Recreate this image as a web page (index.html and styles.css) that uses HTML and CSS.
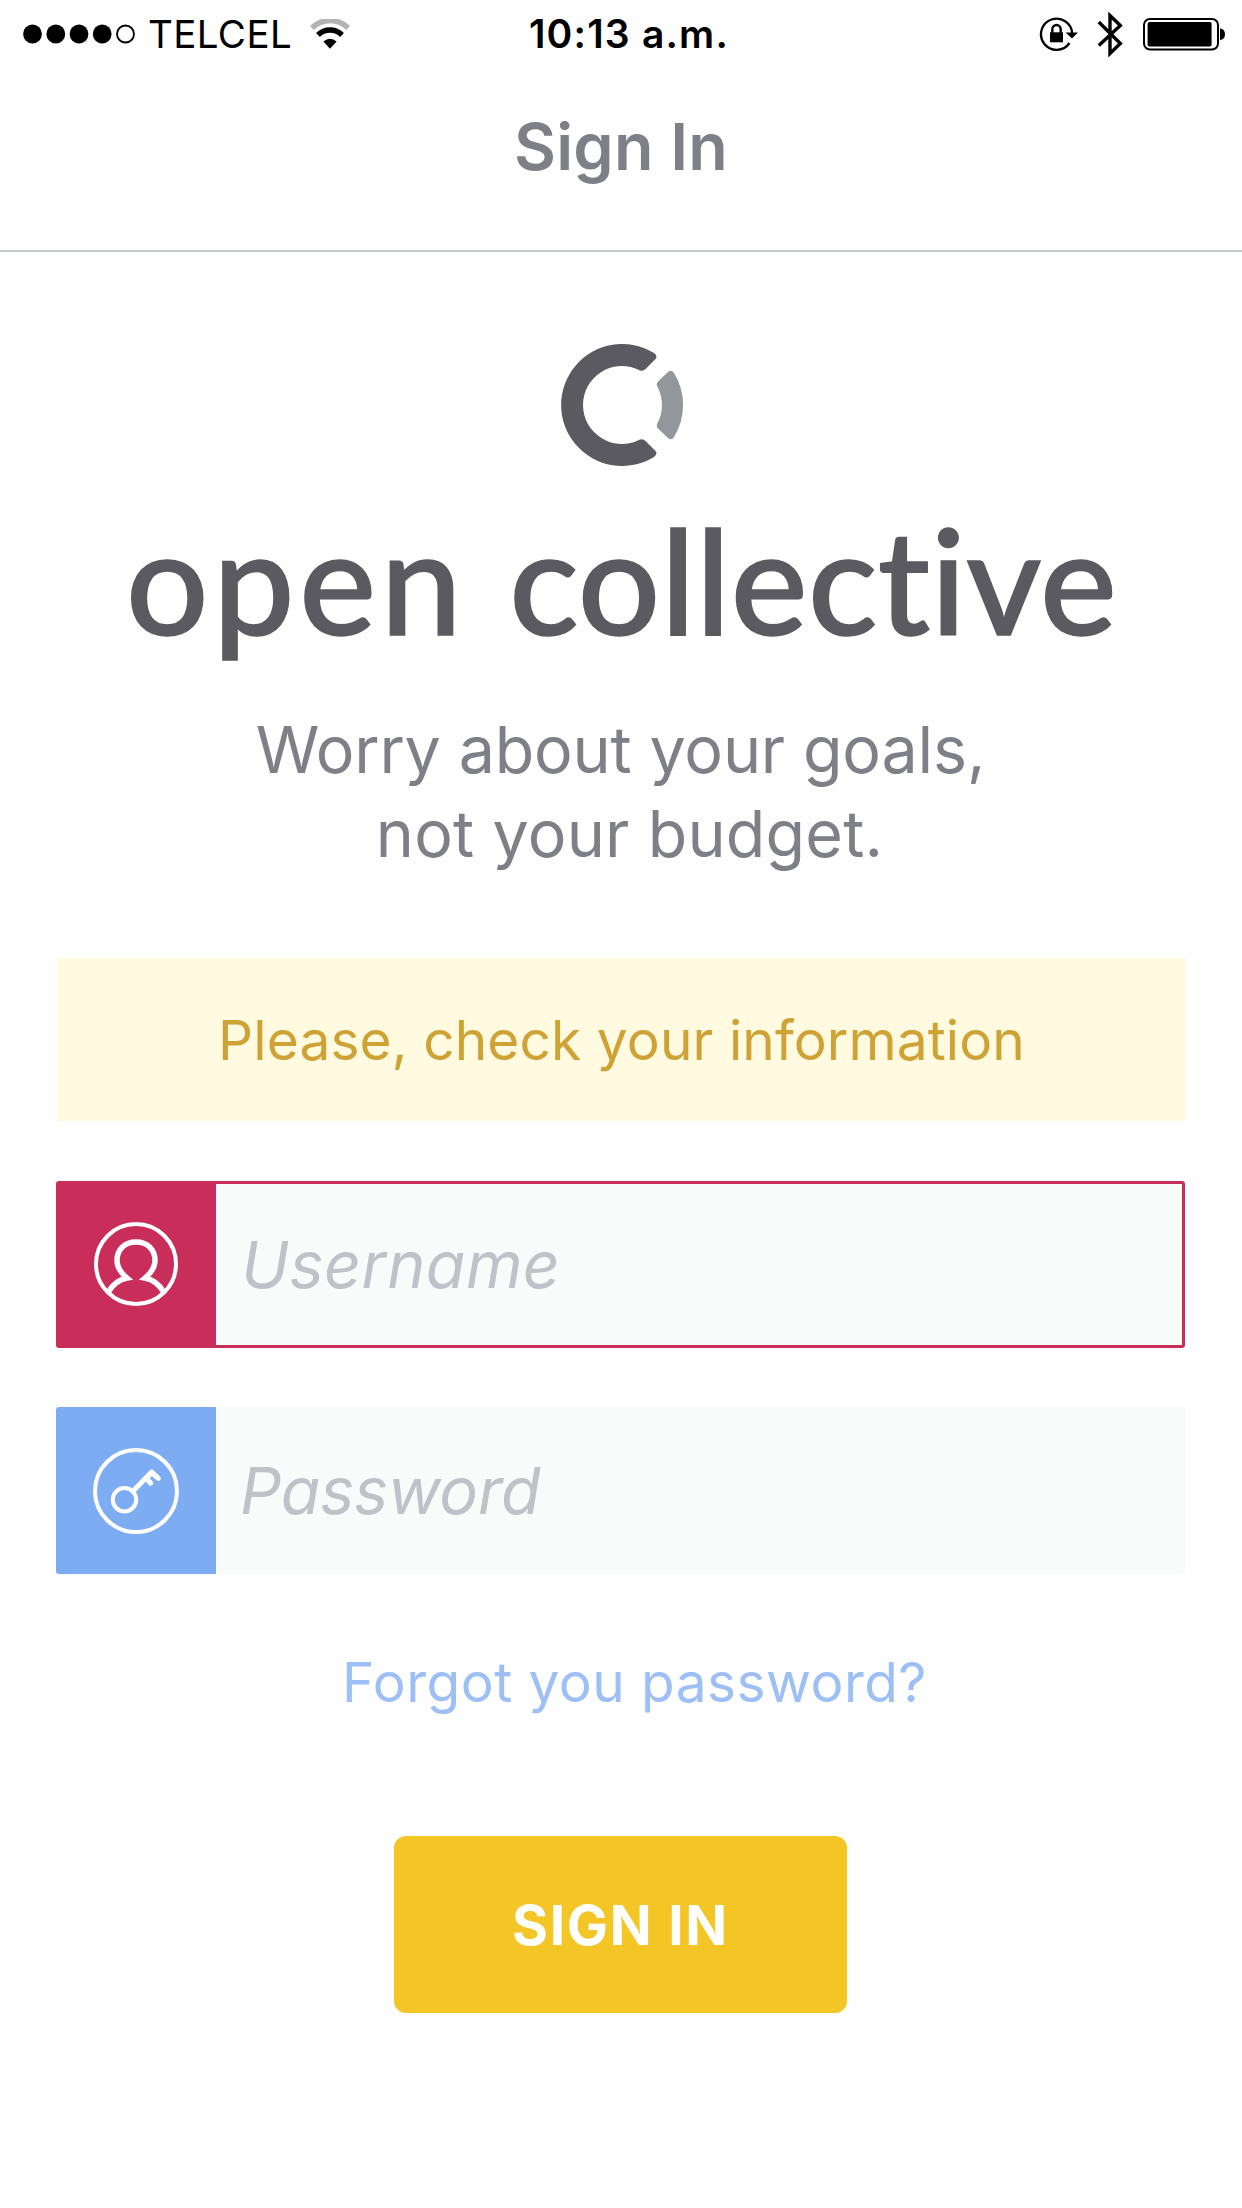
FILE: index.html
```html
<!DOCTYPE html>
<html lang="en">
<head>
<meta charset="utf-8">
<title>Open Collective – Sign In</title>
<link rel="stylesheet" href="styles.css">
</head>
<body>
<div class="status-bar">
  <div class="status-left">
    <svg class="signal" width="113" height="20" viewBox="0 0 113 20">
      <circle cx="9.5" cy="10" r="9.4"/><circle cx="32.8" cy="10" r="9.4"/><circle cx="56" cy="10" r="9.4"/><circle cx="79.2" cy="10" r="9.4"/>
      <circle class="signal-empty" cx="102.5" cy="10" r="8.5"/>
    </svg>
    <span class="carrier">TELCEL</span>
    <svg class="wifi" width="40" height="31" viewBox="0 0 40 31">
      <path class="wifi-weak" d="M1.9 9A25.5 25.5 0 0 1 38.1 9"/>
      <path class="wifi-strong" d="M8 16A17 17 0 0 1 32 16"/>
      <path d="M13.4 22.6Q20 17 26.6 22.6L20 29.7Z"/>
    </svg>
  </div>
  <span class="clock">10:13 a.m.</span>
  <div class="status-right">
    <svg class="rotation" width="40" height="35" viewBox="0 0 40 35">
      <path class="ring" d="M30.5 26A15.6 15.6 0 1 1 33.2 17"/>
      <path d="M26.5 15.5H39L33 21.5Z"/>
      <path d="M11 15.3H24V25.3H11Z"/>
      <path class="shackle" d="M13.3 16V12.6a4.2 4.6 0 0 1 8.4 0V16"/>
    </svg>
    <svg class="bluetooth" width="26" height="45" viewBox="0 0 26 45">
      <path d="M1.8 10L23.3 31.5L13 41.5V3.5L23.3 13.5L1.8 33.5"/>
    </svg>
    <svg class="battery" width="83" height="33" viewBox="0 0 83 33">
      <rect class="shell" x="1" y="1" width="74" height="30.5" rx="6"/>
      <rect x="4.6" y="4" width="64" height="24.5" rx="2"/>
      <path d="M77 10.5Q82 11 82 16.2T77 22Z"/>
    </svg>
  </div>
</div>

<header class="nav"><h1>Sign In</h1></header>

<main class="content">
  <svg class="logo" width="123" height="122" viewBox="0 0 123 122">
    <path class="logo-ring" d="M93 9Q97 12 94.5 15L84.5 25Q82 27.5 79 26.4A39 39 0 1 0 79 95.6Q82 94.5 84.5 97L94.5 107Q97 110 93 113A61 61 0 1 1 93 9Z"/>
    <path class="logo-arc" d="M107 28Q110.5 25 113 29A61 61 0 0 1 113 93Q110.5 97 107 94L97 84.5Q95 82.5 96.3 79.5A39 39 0 0 0 96.3 42.5Q95 39.5 97 37.5Z"/>
  </svg>
  <div class="wordmark"><span class="word-open">open</span><span class="word-collective">collective</span></div>
  <p class="tagline"><span class="tagline-first">Worry about your goals,</span><span class="tagline-second">not your budget.</span></p>

  <form class="form">
    <div class="alert">Please, check your information</div>
    <label class="field field-error">
      <span class="field-icon">
        <svg width="84" height="84" viewBox="0 0 84 84">
          <circle cx="42" cy="42" r="40"/>
          <path class="person" d="M14.5 70C19 62 25 57.500 33 56C27 51 23 45.500 23 38.500C23 27 31 20 42 20S61 27 61 38.500C61 45.500 57 51 51 56C59 57.500 65 62 69.500 70"/>
        </svg>
      </span>
      <input class="username" type="text" placeholder="Username">
    </label>
    <label class="field field-password">
      <span class="field-icon">
        <svg width="86" height="86" viewBox="0 0 86 86">
          <circle cx="43" cy="43" r="41"/>
          <circle cx="31.5" cy="51.7" r="11.7"/>
          <path class="key" d="M39.8 43.2L58.7 24L65.3 30.3M53.2 30.2L57.8 35.2"/>
          <path class="key-bit" d="M54 29L59 24L65 30L62 31L59 28L56 31Z"/>
        </svg>
      </span>
      <input class="password" type="password" placeholder="Password">
    </label>
    <a class="forgot">Forgot you password?</a>
    <button class="submit" type="button">SIGN IN</button>
  </form>
</main>
</body>
</html>
```
FILE: styles.css
```css
* { box-sizing: border-box; }

body {
  margin: 0;
  min-height: 2208px;
  background: #fefefe;
  color: #7f7f88;
  font-family: Inter, "Liberation Sans", sans-serif;
}

h1, p { margin: 0; }
svg { display: block; flex: none; }

/* Status bar */
.status-bar {
  display: grid;
  grid-template-columns: 1fr auto 1fr;
  align-items: center;
  height: 68px;
  padding: 0 16px 0 23px;
  color: #000;
  line-height: 46px;
}
.status-left { display: flex; align-items: center; }
.signal-empty { fill: none; stroke: #000; stroke-width: 1.8; }
.carrier { margin-left: 12px; font-size: 38.5px; letter-spacing: 0.4px; }
.wifi { margin-left: 18px; }
.wifi-weak, .wifi-strong { fill: none; stroke-width: 5.4; }
.wifi-weak { stroke: #b3b3b3; }
.wifi-strong { stroke: #000; }
.clock { padding-left: 9px; font-size: 39px; font-weight: 600; letter-spacing: 1.2px; }
.status-right { display: flex; align-items: center; justify-content: flex-end; }
.ring, .shackle, .shell { fill: none; stroke: #000; stroke-width: 2; }
.ring { stroke-width: 2.3; }
.shackle { stroke-width: 2.4; }
.bluetooth { margin-left: 18px; margin-right: 20px; }
.bluetooth path { fill: none; stroke: #000; stroke-width: 3.4; }

/* Navigation bar */
.nav {
  height: 184px;
  padding-top: 37px;
  border-bottom: 2px solid #c7cad1;
  text-align: center;
}
.nav h1 { font-size: 64.6px; font-weight: 600; line-height: 84px; letter-spacing: 0.2px; }

/* Brand */
.content {
  display: flex;
  flex-direction: column;
  align-items: center;
  padding: 92px 56px 0;
}
.logo { margin-left: 3px; }
.logo-ring { fill: #5a5a60; }
.logo-arc { fill: #93979b; }
.wordmark {
  display: flex;
  gap: 43px;
  margin-top: 38px;
  padding-left: 1px;
  color: #5a5a60;
  font: 500 145px/150px Lato, sans-serif;
  -webkit-text-stroke: 1.5px #5a5a60;
}
.word-open { letter-spacing: 4.6px; }
.word-collective { letter-spacing: 0.4px; }
.tagline {
  display: flex;
  flex-direction: column;
  align-items: center;
  margin-top: 54px;
  font-size: 64.6px;
  line-height: 84px;
}
.tagline-first { margin-right: 1px; letter-spacing: -0.2px; }
.tagline-second { padding-left: 17px; letter-spacing: 0.15px; }

/* Form */
.form {
  display: flex;
  flex-direction: column;
  align-items: center;
  width: 100%;
  margin-top: 82px;
}
.alert {
  display: flex;
  align-items: center;
  justify-content: center;
  align-self: stretch;
  height: 163px;
  margin-left: 1px;
  background: #fffae0;
  color: #cfa236;
  font-size: 55px;
  letter-spacing: 0.1px;
}
.field {
  display: flex;
  align-self: stretch;
  height: 167px;
  margin-top: 60px;
  margin-right: 1px;
  border-radius: 3px;
  overflow: hidden;
  background: #f9fbfa;
}
.field-icon {
  display: flex;
  align-items: center;
  justify-content: center;
  flex: none;
  width: 160px;
}
.field-icon svg { fill: none; stroke: #fff; stroke-width: 4; }
.field-error { border: 3px solid #c92e5a; }
.field-error .field-icon { width: 157px; padding-right: 3px; padding-bottom: 1px; background: #c92e5a; }
.field-icon .person { stroke-width: 5.5; }
.field-icon .key { stroke-width: 5; stroke-linecap: round; stroke-linejoin: round; }
.field-icon .key-bit { fill: #fff; stroke: none; }
.field-password { margin-top: 59px; }
.field-password .field-icon { background: #7eacf2; }
.field input {
  flex: 1;
  min-width: 0;
  padding: 0 25px;
  border: 0;
  background: none;
  font: italic 400 64.6px/84px Inter, sans-serif;
  font-feature-settings: "cv11";
}
.field .username { letter-spacing: 0.4px; }
.field .password { padding-left: 24px; letter-spacing: -0.2px; }
.field input::placeholder { color: #c1c1c9; opacity: 1; }
.forgot {
  margin-top: 73px;
  padding-left: 27px;
  color: #9dbff5;
  font-size: 55px;
  line-height: 70px;
  letter-spacing: 0.45px;
}
.submit {
  width: 453px;
  height: 177px;
  margin-top: 119px;
  margin-right: 1px;
  padding: 0;
  border: 0;
  border-radius: 12px;
  background: #f3c626;
  color: #fff;
  font: 700 55px/70px Inter, sans-serif;
  letter-spacing: 1.7px;
}
```
